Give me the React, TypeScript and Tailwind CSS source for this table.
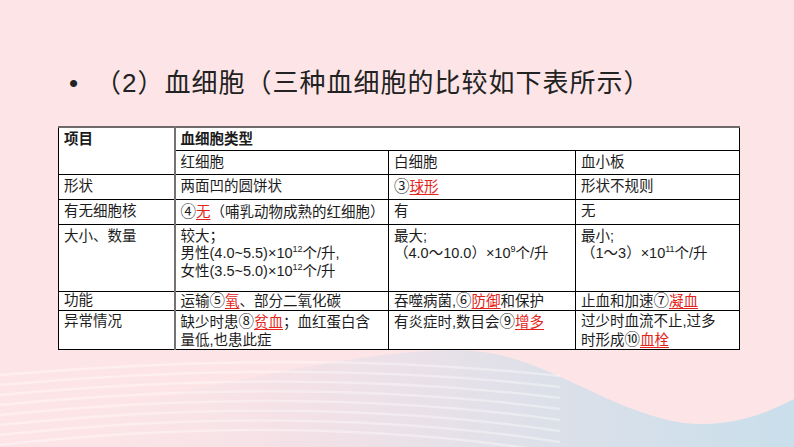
import type { ReactNode } from "react";

const RED = "text-[#e3241b] underline decoration-[#e3241b] underline-offset-2";

function R({ children }: { children: ReactNode }) {
  return <span className={RED}>{children}</span>;
}

// circled numbers take a full-width box, as in the slide
function N({ children }: { children: ReactNode }) {
  return <span className="inline-block w-[1em] text-center text-[15.5px]">{children}</span>;
}

function Sup({ children }: { children: ReactNode }) {
  return <sup className="text-[9px] -top-[6px]">{children}</sup>;
}

function Cell({ children, className = "" }: { children?: ReactNode; className?: string }) {
  return (
    <td className={`border border-black align-top whitespace-nowrap px-[5px] pt-[3px] ${className}`}>{children}</td>
  );
}

function Background() {
  const streaks = [0, 1, 2, 3, 4, 5, 6, 7];
  return (
    <svg className="absolute inset-0" width="794" height="447" viewBox="0 0 794 447">
      <defs>
        <linearGradient id="band" x1="0" y1="0" x2="1" y2="0">
          <stop offset="0" stopColor="#fde5e7" stopOpacity="0" />
          <stop offset="0.35" stopColor="#f1e0e7" stopOpacity="0.7" />
          <stop offset="0.68" stopColor="#dde0e9" />
          <stop offset="1" stopColor="#c9dfeb" />
        </linearGradient>
      </defs>
      <path
        d="M0 447 L0 432 C160 400 330 352 452 350 C540 348 600 410 684 423 C730 428 765 414 794 399 L794 447 Z"
        fill="url(#band)"
      />
      {streaks.map((i) => (
        <path
          key={i}
          d={`M-10 ${376 + i * 10} Q 300 ${348 + i * 9} 560 ${376 + i * 11}`}
          fill="none"
          stroke="#ffffff"
          strokeOpacity="0.35"
          strokeWidth="2.5"
        />
      ))}
    </svg>
  );
}

export default function App() {
  return (
    <div
      className="relative w-[794px] h-[447px] overflow-hidden bg-[#fde5e7] text-[#1c1c1c]"
      style={{ fontFamily: '"Liberation Sans", "Noto Sans CJK SC", sans-serif' }}
    >
      <Background />
      <div className="relative pt-[70px]">
        <div className="flex items-center pl-[69px] text-[26px] leading-[26px] tracking-[1px] text-[#222]">
          <span className="w-[26px]">•</span>
          <span>（2）血细胞（三种血细胞的比较如下表所示）</span>
        </div>

        <table className="ml-[58px] mt-[30px] w-[681px] table-fixed border-collapse bg-white text-[14.5px] leading-[17.5px] border-t-2 border-t-[#6f6a6a] border-b-[1.5px] border-b-black">
          <colgroup>
            <col className="w-[116px]" />
            <col className="w-[214px]" />
            <col className="w-[187px]" />
            <col className="w-[164px]" />
          </colgroup>
          <tbody>
            <tr className="h-[23px]">
              <td rowSpan={2} className="border border-black border-t-2 border-t-[#6f6a6a] border-r-2 border-r-[#77716f] align-top px-[5px] pt-[3px] font-bold">
                项目
              </td>
              <td colSpan={3} className="border border-black border-t-2 border-t-[#6f6a6a] align-top px-[5px] pt-[3px] font-bold">
                血细胞类型
              </td>
            </tr>
            <tr className="h-[24px]">
              <Cell>红细胞</Cell>
              <Cell>白细胞</Cell>
              <Cell>血小板</Cell>
            </tr>
            <tr className="h-[25px]">
              <Cell className="border-r-2 border-r-[#77716f]">形状</Cell>
              <Cell>两面凹的圆饼状</Cell>
              <Cell>
                <N>③</N>
                <R>球形</R>
              </Cell>
              <Cell>形状不规则</Cell>
            </tr>
            <tr className="h-[25px]">
              <Cell className="border-r-2 border-r-[#77716f]">有无细胞核</Cell>
              <Cell>
                <N>④</N>
                <R>无</R>（哺乳动物成熟的红细胞）
              </Cell>
              <Cell>有</Cell>
              <Cell>无</Cell>
            </tr>
            <tr className="h-[67px]">
              <Cell className="border-r-2 border-r-[#77716f]">大小、数量</Cell>
              <Cell>
                较大；
                <br />
                男性(4.0~5.5)×10<Sup>12</Sup>个/升,
                <br />
                女性(3.5~5.0)×10<Sup>12</Sup>个/升
              </Cell>
              <Cell>
                最大;
                <br />
                （4.0～10.0）×10<Sup>9</Sup>个/升
              </Cell>
              <Cell>
                最小;
                <br />
                （1～3）×10<Sup>11</Sup>个/升
              </Cell>
            </tr>
            <tr className="h-[19px]">
              <Cell className="border-r-2 border-r-[#77716f] !pt-0">功能</Cell>
              <Cell className="!pt-0">
                运输<N>⑤</N>
                <R>氧</R>、部分二氧化碳
              </Cell>
              <Cell className="!pt-0">
                吞噬病菌,<N>⑥</N>
                <R>防御</R>和保护
              </Cell>
              <Cell className="!pt-0">
                止血和加速<N>⑦</N>
                <R>凝血</R>
              </Cell>
            </tr>
            <tr className="h-[38px]">
              <Cell className="border-r-2 border-r-[#77716f] !pt-[2px]">异常情况</Cell>
              <Cell className="!pt-[2px]">
                缺少时患<N>⑧</N>
                <R>贫血</R>；血红蛋白含
                <br />
                量低,也患此症
              </Cell>
              <Cell className="!pt-[2px]">
                有炎症时,数目会<N>⑨</N>
                <R>增多</R>
              </Cell>
              <Cell className="!pt-[2px]">
                过少时血流不止,过多
                <br />
                时形成<N>⑩</N>
                <R>血栓</R>
              </Cell>
            </tr>
          </tbody>
        </table>
      </div>
    </div>
  );
}
